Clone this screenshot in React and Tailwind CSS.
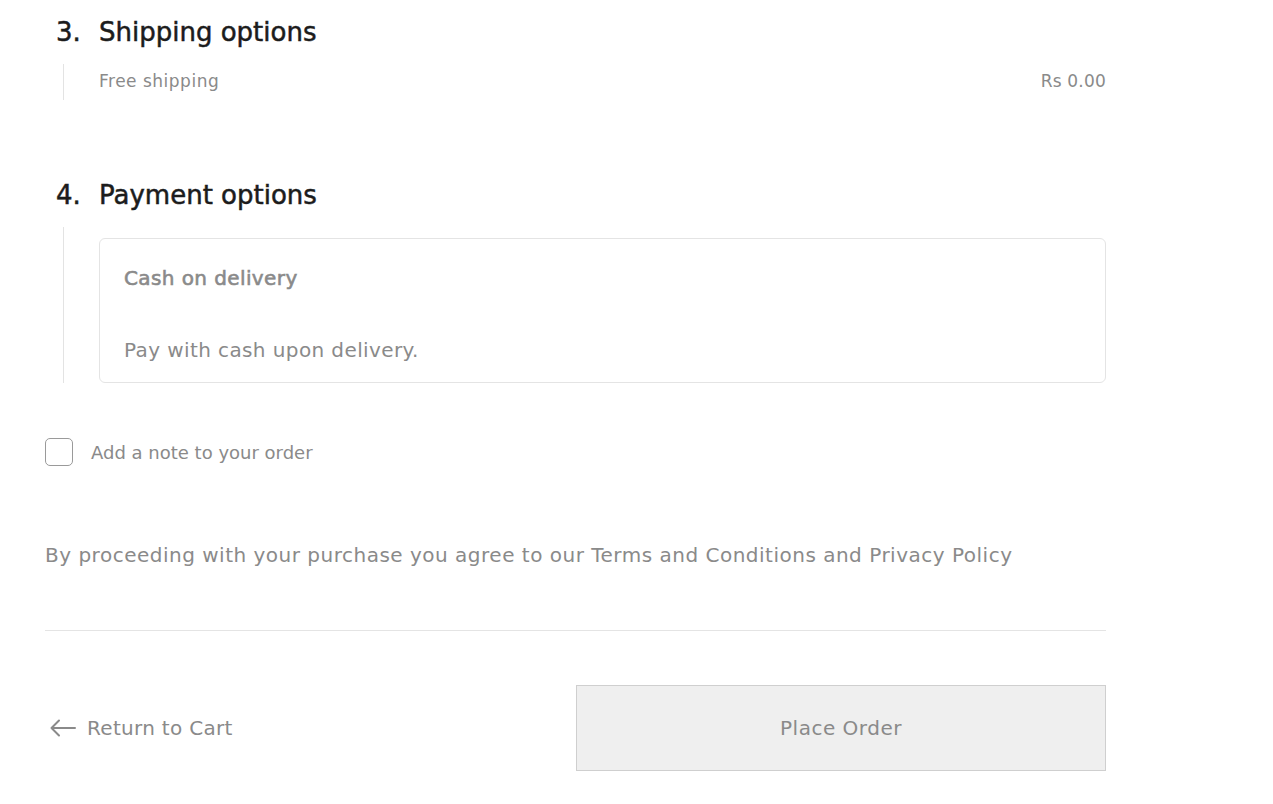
function Section({ num, title, children, className = '' }) {
  return (
    <div className={className}>
      <div className="flex items-center h-[44px] leading-[44px] text-[26px] text-[#1c1c1c] [-webkit-text-stroke:0.5px_#1c1c1c]">
        <span className="w-[54px] pl-[11px]">{num}</span>
        <h2>{title}</h2>
      </div>
      <div className="mt-[10px] ml-[18px] border-l border-[#e3e3e3] pl-[35px]">{children}</div>
    </div>
  );
}

export default function App() {
  return (
    <div className="min-h-screen bg-white font-['DejaVu_Sans',sans-serif]">
      <div className="w-[1061px] ml-[45px] pt-[10px]">
        <Section num="3." title="Shipping options">
          <div className="flex items-center justify-between h-[36px] text-[17px] tracking-[0.5px] text-[#8a8a8a]">
            <span>Free shipping</span>
            <span className="tracking-[0.2px]">Rs 0.00</span>
          </div>
        </Section>

        <Section num="4." title="Payment options" className="mt-[73px]">
          <div className="pt-[11px]">
            <div className="border border-[#e4e4e4] rounded-[6px] h-[145px] px-[24px] pt-[25px] text-[20px] leading-[28px] tracking-[0.4px] text-[#8a8a8a]">
              <div className="[-webkit-text-stroke:0.6px_#8a8a8a]">Cash on delivery</div>
              <div className="mt-[44px]">Pay with cash upon delivery.</div>
            </div>
          </div>
        </Section>

        <label className="flex items-center gap-[18px] mt-[55px] h-[28px]">
          <span className="w-[28px] h-[28px] border border-[#9a9a9a] rounded-[5px]" />
          <span className="text-[18px] text-[#8a8a8a]">Add a note to your order</span>
        </label>

        <p className="mt-[75px] text-[20px] leading-[28px] tracking-[0.5px] text-[#8a8a8a]">
          By proceeding with your purchase you agree to our Terms and Conditions and Privacy Policy
        </p>

        <div className="mt-[61px] border-t border-[#e4e4e4]" />

        <div className="flex items-center justify-between mt-[54px]">
          <button className="flex items-center gap-[11px] pl-[5px] text-[20px] tracking-[0.3px] text-[#8a8a8a]">
            <svg width="26" height="18" viewBox="0 0 26 18" fill="none" stroke="#8a8a8a" strokeWidth="2" strokeLinecap="round" strokeLinejoin="round">
              <path d="M25 9H1.5M9 1.5L1.5 9L9 16.5" />
            </svg>
            Return to Cart
          </button>
          <button className="w-[530px] h-[86px] bg-[#efefef] border border-[#cfcfcf] text-[20px] tracking-[0.5px] text-[#8a8a8a]">
            Place Order
          </button>
        </div>
      </div>
    </div>
  );
}
